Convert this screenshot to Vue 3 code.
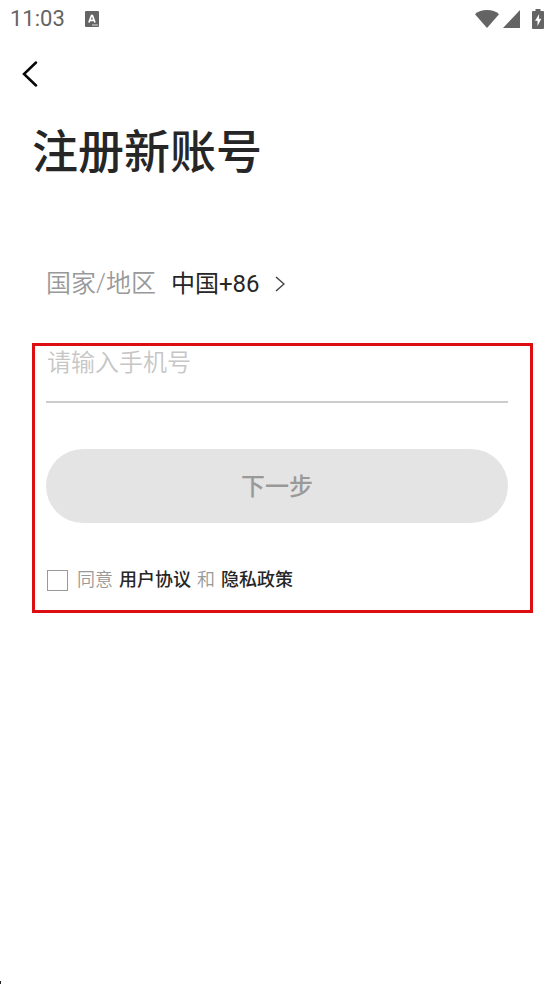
<script setup>
import { ref } from 'vue'

const phone = ref('')
const agreed = ref(false)
</script>

<template>
  <div class="screen">
    <div class="status">
      <div class="status-group">
        <time class="clock">11:03</time>
        <svg class="app-icon" viewBox="0 0 14 16" aria-hidden="true">
          <rect width="14" height="16" rx="1" fill="#646464" />
          <path d="M3.9 11.500 6.500 4.500h.9l2.600 7M5 9.400h4" fill="none" stroke="#fff" stroke-width="1.700" />
          <path d="M7 14h6" stroke="#ddd" stroke-width="1" />
        </svg>
      </div>
      <div class="status-icons">
        <svg width="24" height="18" viewBox="0 0 24 18" aria-hidden="true">
          <path d="M0 4.2C3 1.4 7.2 0 12 0s9 1.4 12 4.2L12 18Z" fill="#646464" />
        </svg>
        <svg width="17" height="18" viewBox="0 0 17 18" aria-hidden="true">
          <path d="M17 0v18H0Z" fill="#646464" />
        </svg>
        <svg class="battery" width="12" height="20" viewBox="0 0 12 20" aria-hidden="true">
          <path d="M3.5 0h5v2H11q1 0 1 1v16q0 1-1 1H1q-1 0-1-1V3q0-1 1-1h2.500Z" fill="#646464" />
          <path d="M7.200 5 3 11.700h2.500V17L9.300 9.800H6.900Z" fill="#fff" />
        </svg>
      </div>
    </div>

    <header class="top">
      <button class="back" type="button" aria-label="返回">
        <svg width="16" height="26" viewBox="0 0 16 26" aria-hidden="true">
          <path d="M14 1.500 2 13l12 11.500" fill="none" stroke="#080808" stroke-width="2.500" stroke-linecap="round" stroke-linejoin="miter" />
        </svg>
      </button>
      <h1>注册新账号</h1>
    </header>

    <main>
      <button class="country" type="button">
        <span class="country-label">国家/地区</span>
        <span class="country-value">中国+86</span>
        <svg width="10" height="16" viewBox="0 0 10 16" aria-hidden="true">
          <path d="M1 1 9 8l-8 7" fill="none" stroke="#444" stroke-width="1.500" />
        </svg>
      </button>

      <form class="form" @submit.prevent>
        <input v-model="phone" class="phone" type="tel" placeholder="请输入手机号" aria-label="请输入手机号" />
        <button class="next" type="submit" disabled>下一步</button>
        <div class="agreement">
          <input id="agree" v-model="agreed" type="checkbox" />
          <label for="agree">同意</label>
          <a href="#terms">用户协议</a>
          <span>和</span>
          <a href="#privacy">隐私政策</a>
        </div>
      </form>
    </main>
    <span class="corner" aria-hidden="true"></span>
  </div>
</template>

<style>
body {
  background: #fff;
}
</style>

<style scoped>
.screen {
  position: relative;
  box-sizing: border-box;
  min-height: 100vh;
  font-family: Roboto, "Noto Sans CJK SC", sans-serif;
  color: #262626;
}

button,
input {
  font: inherit;
}

.status {
  display: flex;
  align-items: center;
  justify-content: space-between;
  height: 38px;
  padding: 0 10px;
}

.status-group {
  display: flex;
  align-items: center;
  gap: 20px;
}

.clock {
  font-size: 22px;
  line-height: 24px;
  color: #646464;
}

.app-icon {
  width: 14px;
  height: 16px;
}

.status-icons {
  display: flex;
  align-items: center;
  gap: 4px;
}

.battery {
  margin-left: 8px;
}

.top {
  padding: 20px 20px 0;
}

.back {
  display: flex;
  align-items: center;
  height: 32px;
  padding: 0 2px;
  border: 0;
  background: none;
}

h1 {
  margin: 28px 0 0 12px;
  font-size: 46px;
  font-weight: 500;
  line-height: 68px;
}

main {
  padding: 80px 21px 0 32px;
}

.country {
  display: flex;
  align-items: center;
  height: 36px;
  margin-left: 14px;
  padding: 0;
  border: 0;
  background: none;
  font-size: 24px;
  line-height: 36px;
  color: #262626;
}

.country-label {
  margin-right: 15px;
  font-size: 25px;
  font-weight: 350;
  color: #999;
}

.country-value {
  margin-right: 15px;
}

.form {
  margin-top: 41px;
  padding: 0 22px 16px 11px;
  border: 3px solid #dc0e12;
}

.phone {
  display: block;
  box-sizing: border-box;
  width: 100%;
  height: 57px;
  padding: 0 0 22px 1px;
  border: 0;
  border-bottom: 2px solid #ccc;
  outline: 0;
  background: none;
  font-size: 24px;
  color: #262626;
}

.phone::placeholder {
  font-weight: 350;
  color: #c6c6c6;
  opacity: 1;
}

.next {
  display: block;
  width: 100%;
  height: 74px;
  margin-top: 46px;
  padding: 0 0 4px;
  border: 0;
  border-radius: 37px;
  background: #e4e4e4;
  font-size: 24px;
  font-weight: 500;
  color: #999;
}

.agreement {
  display: flex;
  align-items: center;
  gap: 6px;
  margin-top: 43px;
  font-size: 18px;
  font-weight: 350;
  line-height: 28px;
  color: #999;
}

.agreement input {
  appearance: none;
  box-sizing: border-box;
  width: 21px;
  height: 21px;
  margin: 0 3px 0 1px;
  border: 1px solid #999;
}

.agreement input:checked {
  background: #999;
}

.agreement a {
  font-weight: 500;
  color: #262626;
  text-decoration: none;
}

.corner {
  position: absolute;
  bottom: 0;
  left: 0;
  width: 1px;
  height: 3px;
  background: #222;
}
</style>
